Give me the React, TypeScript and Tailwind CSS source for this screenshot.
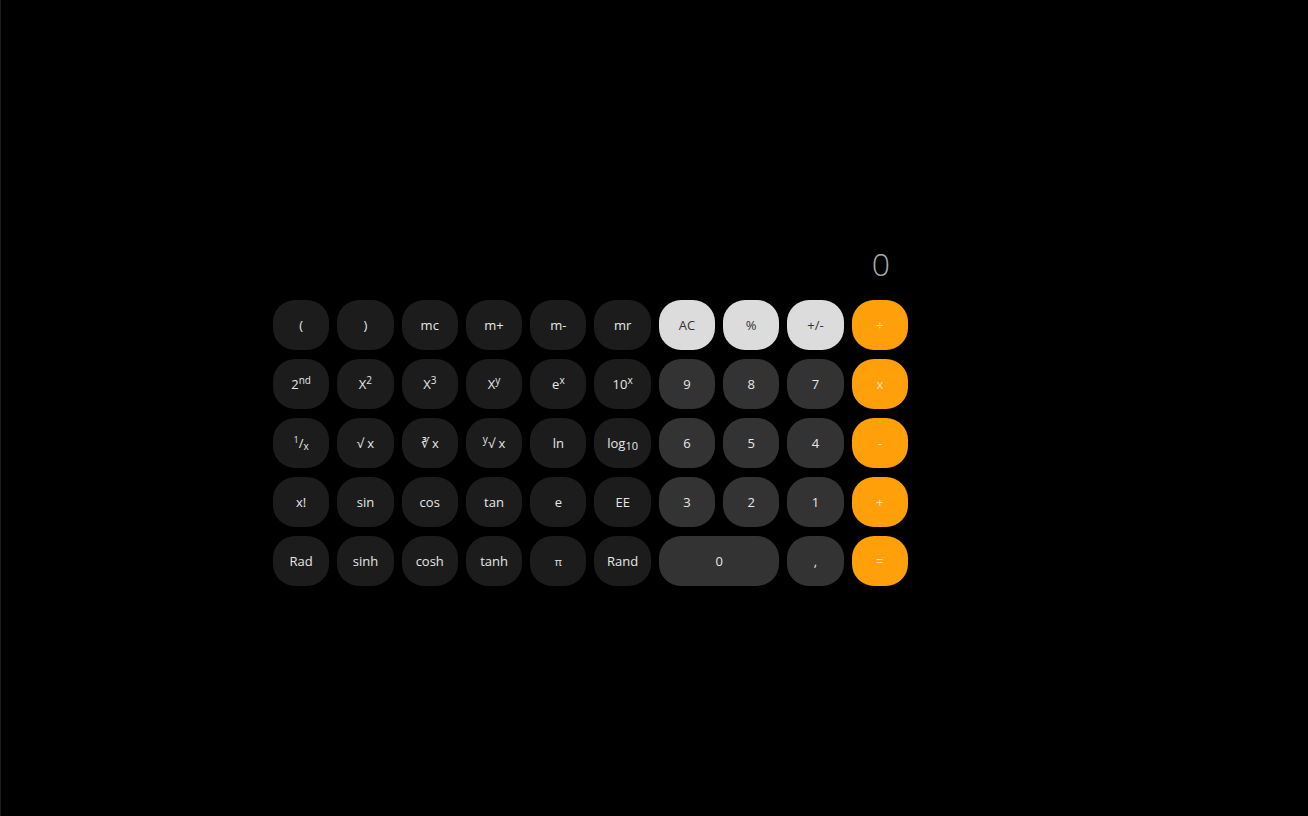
import type { ReactNode } from "react";

type Kind = "fn" | "digit" | "light" | "op";

type Key = {
  label: ReactNode;
  kind: Kind;
  wide?: boolean;
};

const kindClass: Record<Kind, string> = {
  fn: "bg-[#1c1c1c] text-[#e6e6e6]",
  digit: "bg-[#333333] text-[#e6e6e6]",
  light: "bg-[#dcdcdc] text-[#333333]",
  op: "bg-[#ff9f0a] text-[#ffe7c2] text-[12px]",
};

const sup = (base: string, s: string) => (
  <span>
    {base}
    <sup className="text-[10px]">{s}</sup>
  </span>
);

const keys: Key[] = [
  // row 1
  { label: "(", kind: "fn" },
  { label: ")", kind: "fn" },
  { label: "mc", kind: "fn" },
  { label: "m+", kind: "fn" },
  { label: "m-", kind: "fn" },
  { label: "mr", kind: "fn" },
  { label: "AC", kind: "light" },
  { label: "%", kind: "light" },
  { label: "+/-", kind: "light" },
  { label: "÷", kind: "op" },
  // row 2
  { label: sup("2", "nd"), kind: "fn" },
  { label: sup("X", "2"), kind: "fn" },
  { label: sup("X", "3"), kind: "fn" },
  { label: sup("X", "y"), kind: "fn" },
  { label: sup("e", "x"), kind: "fn" },
  { label: sup("10", "x"), kind: "fn" },
  { label: "9", kind: "digit" },
  { label: "8", kind: "digit" },
  { label: "7", kind: "digit" },
  { label: "x", kind: "op" },
  // row 3
  {
    label: (
      <span>
        <sup className="text-[9px]">1</sup>/<sub className="text-[10px]">x</sub>
      </span>
    ),
    kind: "fn",
  },
  { label: "√ x", kind: "fn" },
  { label: "∛ x", kind: "fn" },
  {
    label: (
      <span>
        <sup className="text-[10px]">y</sup>√ x
      </span>
    ),
    kind: "fn",
  },
  { label: "ln", kind: "fn" },
  {
    label: (
      <span>
        log<sub className="text-[11px]">10</sub>
      </span>
    ),
    kind: "fn",
  },
  { label: "6", kind: "digit" },
  { label: "5", kind: "digit" },
  { label: "4", kind: "digit" },
  { label: "-", kind: "op" },
  // row 4
  { label: "x!", kind: "fn" },
  { label: "sin", kind: "fn" },
  { label: "cos", kind: "fn" },
  { label: "tan", kind: "fn" },
  { label: "e", kind: "fn" },
  { label: "EE", kind: "fn" },
  { label: "3", kind: "digit" },
  { label: "2", kind: "digit" },
  { label: "1", kind: "digit" },
  { label: "+", kind: "op" },
  // row 5
  { label: "Rad", kind: "fn" },
  { label: "sinh", kind: "fn" },
  { label: "cosh", kind: "fn" },
  { label: "tanh", kind: "fn" },
  { label: <span className="text-[11px]">π</span>, kind: "fn" },
  { label: "Rand", kind: "fn" },
  { label: "0", kind: "digit", wide: true },
  { label: ",", kind: "digit" },
  { label: "=", kind: "op" },
];

const App = () => {
  return (
    <div className="min-h-screen bg-black border-l border-[#1e1e1e] font-['Open_Sans',sans-serif]">
      <div className="pt-[244px] pl-[272px]">
        <div className="w-[635px]">
          {/* Display */}
          <div className="text-right pr-[18px] text-[32px] leading-[40px] font-light text-[#a3abb0] mb-[16px]">
            0
          </div>

          {/* Keypad */}
          <div className="grid grid-cols-10 gap-x-[8px] gap-y-[9px]">
            {keys.map((k, i) => (
              <button
                key={i}
                className={`h-[50px] rounded-[22px] flex items-center justify-center text-[13px] leading-none ${
                  kindClass[k.kind]
                } ${k.wide ? "col-span-2" : ""}`}
              >
                {k.label}
              </button>
            ))}
          </div>
        </div>
      </div>
    </div>
  );
};

export default App;
